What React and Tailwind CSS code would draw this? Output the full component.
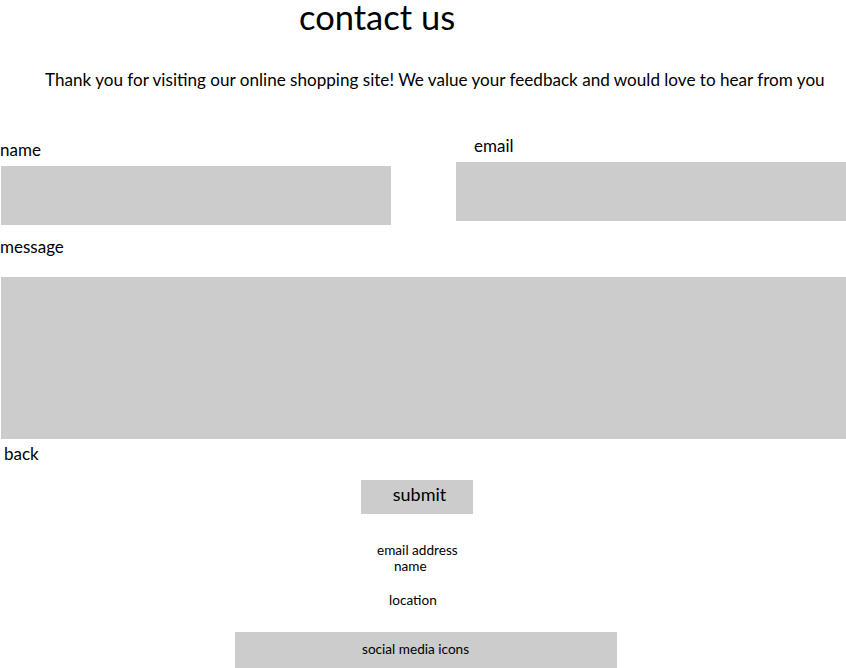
export default function App() {
  return (
    <div className="w-[846px] h-[668px] overflow-hidden bg-white text-black font-['Lato',sans-serif]">
      <h1 className="pl-[299px] text-[34.5px] leading-[34px] font-normal">contact us</h1>
      <p className="mt-[36px] pl-[45px] text-[17.1px] leading-[20px] whitespace-nowrap">
        Thank you for visiting our online shopping site! We value your feedback and would love to hear from you
      </p>

      <div className="mt-[46px] flex items-start">
        <div className="pt-[4px] w-[391px]">
          <label className="block text-[17px] leading-[20px]">name</label>
          <div className="mt-[6px] ml-[1px] w-[390px] h-[59px] bg-[#cccccc]" />
        </div>
        <div className="ml-[65px] w-[390px]">
          <label className="block pl-[18px] text-[17px] leading-[20px]">email</label>
          <div className="mt-[6px] w-[390px] h-[59px] bg-[#cccccc]" />
        </div>
      </div>

      <label className="block mt-[12px] text-[17px] leading-[20px]">message</label>
      <div className="mt-[20px] ml-[1px] w-[845px] h-[162px] bg-[#cccccc]" />

      <div className="mt-[5px] pl-[4px] text-[17px] leading-[20px]">back</div>

      <div className="mt-[16px] ml-[361px] w-[112px] h-[34px] bg-[#cccccc] flex items-start justify-center pt-[4px] pl-[5px]">
        <span className="text-[18px] leading-[20px]">submit</span>
      </div>

      <div className="mt-[28px] text-[13.6px] leading-[16px]">
        <div className="pl-[377px]">email address</div>
        <div className="pl-[394px]">name</div>
        <div className="mt-[18px] pl-[389px]">location</div>
      </div>

      <div className="mt-[24px] ml-[235px] w-[382px] h-[36px] bg-[#cccccc] pt-[9px] pl-[127px] text-[13.6px] leading-[16px]">
        social media icons
      </div>
    </div>
  );
}
